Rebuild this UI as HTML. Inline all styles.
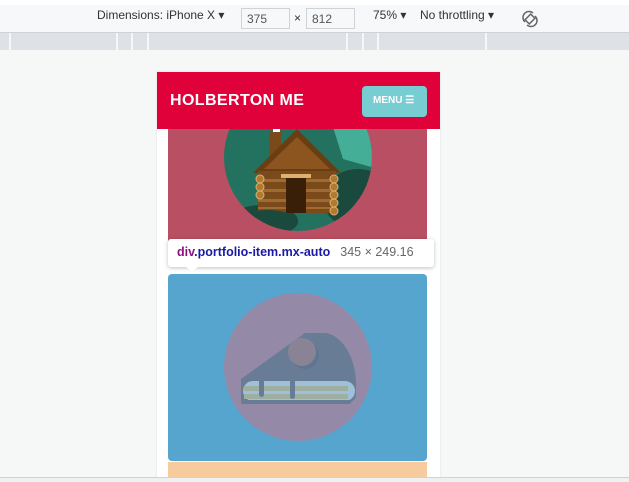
<!DOCTYPE html>
<html><head><meta charset="utf-8"><style>
*{margin:0;padding:0;box-sizing:border-box}
body{width:629px;height:482px;overflow:hidden;background:#f6f8f8;font-family:"Liberation Sans",sans-serif;position:relative}
.top{position:absolute;left:0;top:0;width:629px;height:33px;background:#f7f8f9;border-top:5px solid #fff;border-bottom:1px solid #cfd2d6}
.t{position:absolute;top:8px;font-size:12px;color:#333;white-space:nowrap}
.inp{position:absolute;top:8px;width:40px;height:21px;border:1px solid #cfd2d6;background:#f7f8f9;font-size:12px;color:#555;padding:3px 5px}
.ruler{position:absolute;left:0;top:33px;width:629px;height:17px;background:#dee1e5}
.ruler i{position:absolute;top:0;width:2px;height:17px;background:#f6f8f8}
.phone{position:absolute;left:157px;top:72px;width:283px;height:410px;background:#fff;box-shadow:0 0 2px #ddd}
.hdr{position:absolute;left:157px;top:72px;width:283px;height:57px;background:#e0003a}
.brand{position:absolute;left:13px;top:20px;color:#fff;font-weight:bold;font-size:16px;letter-spacing:.4px}
.menu{position:absolute;left:205px;top:14px;width:65px;height:31px;background:#77cdd2;border-radius:4px;color:#fff;font-weight:bold;font-size:10px;padding:9px 0 0 11px}
.bottom{position:absolute;left:0;top:477px;width:629px;height:5px;background:#eef0f2;border-top:1px solid #cfd2d6}
</style></head><body>
<div class="top"></div>
<div class="t" style="left:97px">Dimensions: iPhone X ▾</div>
<div class="inp" style="left:241px;width:49px">375</div>
<div class="t" style="left:294px;top:11px">×</div>
<div class="inp" style="left:306px;width:49px">812</div>
<div class="t" style="left:373px">75% ▾</div>
<div class="t" style="left:420px">No throttling ▾</div>
<svg style="position:absolute;left:521px;top:10px" width="18" height="18" viewBox="0 0 18 18" fill="none" stroke="#666" stroke-width="1.5"><path d="M4 12 A6 6 0 0 1 12 3"/><path d="M14 6 A6 6 0 0 1 6 15"/><rect x="6" y="5" width="6" height="8" transform="rotate(45 9 9)"/></svg>
<div class="ruler"><i style="left:9px"></i><i style="left:116px"></i><i style="left:131px"></i><i style="left:147px"></i><i style="left:346px"></i><i style="left:362px"></i><i style="left:377px"></i><i style="left:485px"></i></div>
<div class="phone"></div>
<svg style="position:absolute;left:168px;top:129px" width="259" height="125">
<defs><clipPath id="c"><circle cx="130" cy="28" r="74"/></clipPath></defs>
<rect width="259" height="125" fill="#b94f63"/>
<g clip-path="url(#c)">
<rect x="50" y="-50" width="160" height="160" fill="#237260"/>
<path d="M150 -50 L210 -50 L210 40 L175 30 Z" fill="#44ae96"/>
<ellipse cx="190" cy="70" rx="35" ry="30" fill="#1a4a3d"/>
<ellipse cx="95" cy="92" rx="35" ry="16" fill="#1a4a3d"/>
</g>
<rect x="105" y="0" width="7" height="3" fill="#fff"/>
<rect x="101" y="3" width="12" height="26" fill="#7a4a1a"/>
<path d="M85 44 L129 0 L173 44 Z" fill="#6b3d12"/>
<path d="M96 40 L129 8 L162 40 Z" fill="#8c5520"/>
<rect x="90" y="42" width="78" height="42" fill="#7a4a1a"/>
<rect x="90" y="50" width="78" height="3" fill="#a06a30"/><rect x="90" y="60" width="78" height="3" fill="#a06a30"/><rect x="90" y="70" width="78" height="3" fill="#a06a30"/><rect x="90" y="78" width="78" height="2" fill="#a06a30"/>
<rect x="118" y="48" width="20" height="36" fill="#3a1f08"/>
<rect x="113" y="45" width="30" height="4" fill="#e0b070"/>
<g fill="#b07a30" stroke="#e0b070"><circle cx="92" cy="50" r="4"/><circle cx="92" cy="58" r="4"/><circle cx="92" cy="66" r="4"/><circle cx="166" cy="50" r="4"/><circle cx="166" cy="58" r="4"/><circle cx="166" cy="66" r="4"/><circle cx="166" cy="74" r="4"/><circle cx="166" cy="82" r="4"/></g>
<g clip-path="url(#c)"><ellipse cx="100" cy="93" rx="30" ry="12" fill="#1a4a3d"/></g>
</svg>
<div class="hdr"><div class="brand">HOLBERTON ME</div><div class="menu">MENU ☰</div></div>
<svg style="position:absolute;left:168px;top:274px" width="259" height="187">
<rect width="259" height="187" rx="4" fill="#55a5cf"/>
<circle cx="130" cy="93" r="74" fill="#948aa8"/>
<path d="M73 105 L137 59 L158 59 A34 52 0 0 1 188 112 L188 120 A9 9 0 0 1 179 129 L76 129 A3 3 0 0 1 73 126 Z" fill="#687c96"/>
<rect x="75" y="107" width="112" height="20" rx="10" fill="#9fc0d8"/>
<rect x="76" y="112" width="104" height="5" fill="#9eaea0"/><rect x="76" y="120" width="104" height="5" fill="#9eaea0"/>
<rect x="73" y="126" width="110" height="4" rx="2" fill="#687c96"/>
<rect x="91" y="104" width="5" height="19" rx="2.5" fill="#687c96"/><rect x="122" y="104" width="5" height="21" rx="2.5" fill="#687c96"/>
<circle cx="137" cy="81" r="14" fill="#5f7590"/>
<circle cx="134" cy="78" r="14" fill="#8a8396"/>
</svg>
<div style="position:absolute;left:168px;top:462px;width:259px;height:20px;background:#f7cb9d"></div>
<div style="position:absolute;left:168px;top:239px;width:266px;height:28px;background:#fff;border-radius:3px;box-shadow:0 1px 4px rgba(0,0,0,.25);font-size:12.5px;padding:6px 9px;white-space:nowrap"><b style="color:#881280">div</b><b style="color:#1a1aa6">.portfolio-item.mx-auto</b><span style="color:#666;margin-left:10px">345 × 249.16</span></div>
<div style="position:absolute;left:185px;top:266px;width:0;height:0;border-left:7px solid transparent;border-right:7px solid transparent;border-top:6px solid #fff"></div>
<div class="bottom"></div>
</body></html>
